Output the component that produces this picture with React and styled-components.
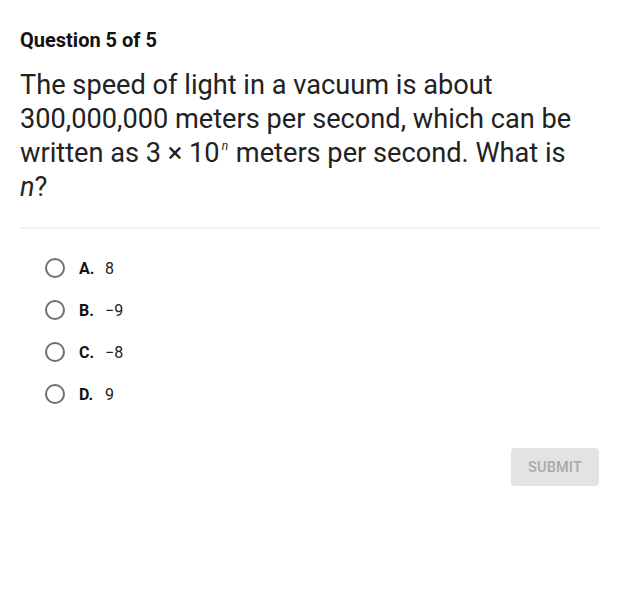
import React from "react";
import styled, { createGlobalStyle } from "styled-components";

const Global = createGlobalStyle`
  html, body { margin: 0; padding: 0; background: #fff; }
  body { font-family: Roboto, "Liberation Sans", sans-serif; color: #212121; }
`;

const Page = styled.div`
  width: 640px;
  height: 596px;
  box-sizing: border-box;
  padding: 30px 41px 0 20px;
  display: flex;
  flex-direction: column;
`;

const Header = styled.div`
  font-size: 20px;
  font-weight: 700;
  color: #111;
  line-height: 20px;
`;

const Prompt = styled.p`
  margin: 18px 0 0;
  max-width: 565px;
  font-size: 27.2px;
  line-height: 34px;
  color: #222;
`;

const Sup = styled.sup`
  display: inline-block;
  font-size: 12px;
  line-height: 12px;
  font-style: italic;
  vertical-align: top;
  margin: 0 1px 0 2px;
  position: relative;
  top: 4px;
`;

const Divider = styled.hr`
  border: 0;
  border-top: 2px solid #f0f0f0;
  margin: 23px 0 0;
`;

const Options = styled.div`
  display: flex;
  flex-direction: column;
  gap: 20px;
  padding: 28px 0 0 25px;
`;

const Option = styled.label`
  display: flex;
  align-items: center;
  height: 22px;
  cursor: pointer;
`;

const Radio = styled.span`
  width: 16px;
  height: 16px;
  border: 2px solid #6f6f6f;
  border-radius: 50%;
  margin-right: 14px;
  flex: none;
`;

const Letter = styled.span`
  font-size: 16px;
  font-weight: 700;
  width: 26px;
  color: #111;
`;

const Value = styled.span`
  font-size: 16px;
  color: #222;
`;

const Footer = styled.div`
  display: flex;
  justify-content: flex-end;
  margin-top: 43px;
`;

const Submit = styled.button`
  width: 88px;
  height: 38px;
  border: 0;
  border-radius: 4px;
  background: #e3e3e3;
  color: #a9a9a9;
  font-family: Roboto, "Liberation Sans", sans-serif;
  font-size: 14.5px;
  font-weight: 500;
  letter-spacing: 0.2px;
`;

const options = [
  ["A.", "8"],
  ["B.", "\u22129"],
  ["C.", "\u22128"],
  ["D.", "9"],
];

export default function App() {
  return (
    <>
      <Global />
      <Page>
        <Header>Question 5 of 5</Header>
        <Prompt>
          The speed of light in a vacuum is about 300,000,000 meters per second, which can be
          written as 3 × 10<Sup>n</Sup> meters per second. What is <i>n</i>?
        </Prompt>
        <Divider />
        <Options>
          {options.map(([l, v]) => (
            <Option key={l}>
              <Radio />
              <Letter>{l}</Letter>
              <Value>{v}</Value>
            </Option>
          ))}
        </Options>
        <Footer>
          <Submit disabled>SUBMIT</Submit>
        </Footer>
      </Page>
    </>
  );
}
